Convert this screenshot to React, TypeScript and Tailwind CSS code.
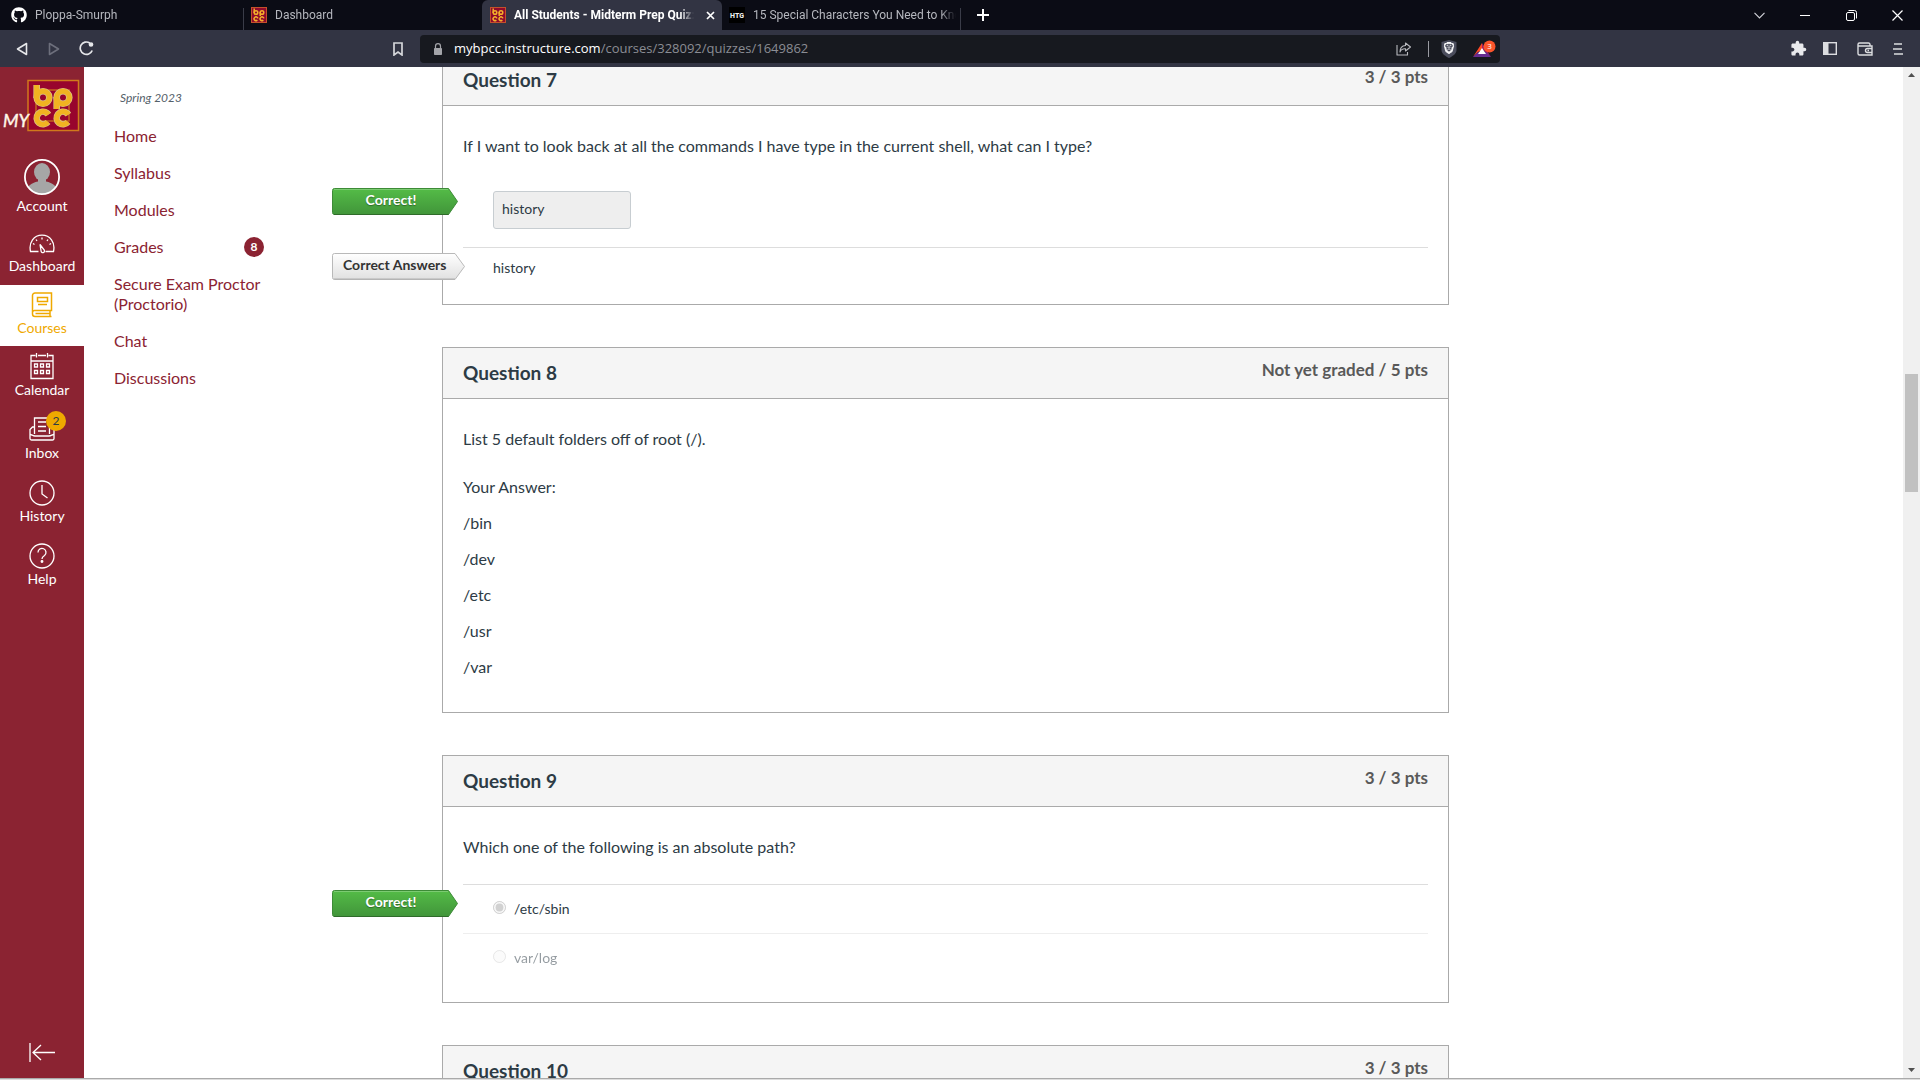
import type { ReactNode } from "react";
import { FaGithub } from "react-icons/fa";
import { SiBrave } from "react-icons/si";
import { MdExtension } from "react-icons/md";

/* ---------- Logos ---------- */

function CollegeFavicon() {
  return (
    <svg width="16" height="16" viewBox="0 0 16 16" className="shrink-0" aria-hidden="true">
      <rect x="0.5" y="0.5" width="15" height="15" fill="#8e0a2c" stroke="#c4502a" />
      <g fill="none" stroke="#f3b02a" strokeWidth="1.500">
        <circle cx="5" cy="5.500" r="1.800" />
        <line x1="3.200" y1="1.500" x2="3.200" y2="6" />
        <circle cx="11" cy="5.500" r="1.800" />
        <line x1="9.200" y1="5" x2="9.200" y2="9" />
        <circle cx="5" cy="11.800" r="1.900" strokeDasharray="9 3" transform="rotate(45 5 11.800)" />
        <circle cx="11" cy="11.800" r="1.900" strokeDasharray="9 3" transform="rotate(45 11 11.800)" />
      </g>
    </svg>
  );
}

function CollegeLogo() {
  return (
    <svg width="84" height="60" viewBox="0 0 84 60" aria-hidden="true">
      <rect x="28" y="5.500" width="50.500" height="50" fill="#98052d" stroke="#d07a1c" strokeWidth="1.500" />
      <rect x="36" y="15" width="33" height="31" fill="none" stroke="#c2641f" strokeWidth="1.500" />
      {[
        { color: "#d9c38a", width: 6.6 },
        { color: "#f1b321", width: 5.2 },
      ].map((s) => (
        <g key={s.color} fill="none" stroke={s.color} strokeWidth={s.width}>
          <circle cx="43" cy="22.500" r="6.300" />
          <line x1="36.700" y1="10" x2="36.700" y2="23" />
          <circle cx="63" cy="22.500" r="6.300" />
          <line x1="56.700" y1="22" x2="56.700" y2="34" />
          <circle cx="43" cy="43" r="6.300" strokeDasharray="31 8.600" transform="rotate(39 43 43)" />
          <circle cx="63" cy="43" r="6.300" strokeDasharray="31 8.600" transform="rotate(39 63 43)" />
        </g>
      ))}
      <g
        fontFamily="Lato, sans-serif"
        fontStyle="italic"
        fontSize="18"
        fill="#fff8e8"
        stroke="#fff8e8"
        strokeWidth="0.400"
      >
        <text x="3" y="52">
          MY
        </text>
      </g>
    </svg>
  );
}

/* ---------- Browser chrome ---------- */

function Tab({ icon, label, active }: { icon: ReactNode; label: string; active?: boolean }) {
  return (
    <div
      className={
        active
          ? "flex h-[30px] w-60 items-center gap-2 rounded-t-md bg-[#323443] pl-2 pr-1 text-white"
          : "flex h-[30px] items-center gap-2 pl-[7px] text-[#b5b7be]"
      }
    >
      {icon}
      <span
        className={
          active
            ? "min-w-0 flex-1 overflow-hidden whitespace-nowrap font-bold [mask-image:linear-gradient(to_right,black_92%,transparent)]"
            : "min-w-0 flex-1 overflow-hidden whitespace-nowrap [mask-image:linear-gradient(to_right,black_92%,transparent)]"
        }
      >
        {label}
      </span>
      {active && (
        <button aria-label="Close tab" className="flex w-4 justify-center">
          <svg width="9" height="9" viewBox="0 0 9 9" stroke="#fff" strokeWidth="1.700">
            <path d="M1 1l7 7M8 1l-7 7" />
          </svg>
        </button>
      )}
    </div>
  );
}

function TabStrip() {
  return (
    <div className="flex h-[30px] items-center bg-[#0b0c15] font-[Roboto,sans-serif] text-[12px]">
      <div className="w-[243px] pl-1">
        <Tab icon={<FaGithub size={16} color="#fff" className="shrink-0" />} label="Ploppa-Smurph" />
      </div>
      <div className="mt-2 h-[22px] w-px bg-[#3a3c48]" />
      <div className="w-[238px]">
        <Tab icon={<CollegeFavicon />} label="Dashboard" />
      </div>
      <Tab active icon={<CollegeFavicon />} label="All Students - Midterm Prep Quiz: CIT" />
      <div className="w-[238px] pr-1">
        <Tab
          icon={
            <svg width="16" height="16" viewBox="0 0 16 16" className="shrink-0 bg-black">
              <text x="8" y="11" fontSize="7" fontWeight="800" textAnchor="middle" fill="#eee" fontFamily="Roboto, sans-serif">
                HTG
              </text>
            </svg>
          }
          label="15 Special Characters You Need to Know for Bash"
        />
      </div>
      <div className="mt-2 h-[22px] w-px bg-[#3a3c48]" />
      <button aria-label="New tab" className="ml-3.5 flex size-4 items-center justify-center">
        <svg width="12" height="12" viewBox="0 0 12 12" stroke="#fff" strokeWidth="2">
          <path d="M6 0v12M0 6h12" />
        </svg>
      </button>
      <div className="ml-auto flex items-center">
        <button aria-label="Search tabs" className="flex w-[46px] justify-center">
          <svg width="11" height="7" viewBox="0 0 11 7" fill="none" stroke="#cfd0d6" strokeWidth="1.200">
            <path d="M.5 .8l5 5 5-5" />
          </svg>
        </button>
        <button aria-label="Minimize" className="flex w-[46px] justify-center">
          <svg width="10" height="10" viewBox="0 0 10 10" stroke="#fff">
            <path d="M0 5.500h10" />
          </svg>
        </button>
        <button aria-label="Restore" className="flex w-[46px] justify-center">
          <svg width="11" height="11" viewBox="0 0 11 11" fill="none" stroke="#fff">
            <rect x=".5" y="2.500" width="8" height="8" rx="1.500" />
            <path d="M2.500 .5h6a2 2 0 0 1 2 2v6" />
          </svg>
        </button>
        <button aria-label="Close window" className="flex w-[46px] justify-center">
          <svg width="11" height="11" viewBox="0 0 11 11" stroke="#fff" strokeWidth="1.200">
            <path d="M.5 .5l10 10M10.500 .5l-10 10" />
          </svg>
        </button>
      </div>
    </div>
  );
}

function Toolbar() {
  return (
    <div className="flex h-[37px] items-center bg-[#323443]">
      <div className="flex flex-none items-center pl-4">
        <button aria-label="Back" className="w-8">
          <svg width="12" height="14" viewBox="0 0 12 14" fill="none" stroke="#e6e7ea" strokeWidth="1.600" strokeLinejoin="round">
            <path d="M10.500 1.500v11L1.500 7z" />
          </svg>
        </button>
        <button aria-label="Forward" className="w-[31px]">
          <svg width="12" height="14" viewBox="0 0 12 14" fill="none" stroke="#6d6f7c" strokeWidth="1.600" strokeLinejoin="round">
            <path d="M1.500 1.500v11L10.500 7z" />
          </svg>
        </button>
        <button aria-label="Reload" className="w-[312px]">
          <svg width="15" height="15" viewBox="0 0 15 15" fill="none" stroke="#e6e7ea" strokeWidth="1.700">
            <path d="M10.800 2A6.200 6.200 0 1 0 13.200 9.500" />
            <circle cx="12" cy="3.500" r="1.500" fill="#e6e7ea" />
          </svg>
        </button>
        <button aria-label="Bookmark" className="w-[29px] pl-0.5">
          <svg width="10" height="14" viewBox="0 0 10 14" fill="none" stroke="#d5d6da" strokeWidth="1.700">
            <path d="M1 1h8v12L5 10 1 13z" />
          </svg>
        </button>
      </div>
      <div className="flex h-7 flex-1 items-center rounded bg-[#17191f] pl-3 pr-1">
        <svg width="12" height="12" viewBox="0 0 12 12" className="shrink-0">
          <rect x="2" y="5" width="8" height="7" rx=".8" fill="#a3a4a9" />
          <path d="M3.500 6V3.200a2.500 2.500 0 0 1 5 0V6" fill="none" stroke="#a3a4a9" strokeWidth="1.200" />
        </svg>
        <a href="#address" className="ml-2.5 flex-1 whitespace-nowrap text-[13px] text-[#8b8d94]">
          <span className="text-white">mybpcc.instructure.com</span>/courses/328092/quizzes/1649862
        </a>
        <button aria-label="Share this page">
          <svg width="15" height="14" viewBox="0 0 15 14" fill="none" stroke="#b9babf" strokeWidth="1.100" strokeLinejoin="round">
            <path d="M1 3v10h10.500v-3" />
            <path d="M9.500 1l5 4-5 4V6.800C6.500 6.600 4.800 7.800 4 10c0-3.800 2-6.300 5.500-6.500z" />
          </svg>
        </button>
        <div className="ml-[17px] mr-3 h-4 w-px bg-[#9a9ba2]" />
        <button aria-label="Brave Shields" className="flex w-4 justify-center">
          <svg width="16" height="18" viewBox="0 0 16 18">
            <path d="M8 0l7.500 2v8c0 4-4.500 6.500-7.500 8C5 16.500 .5 14 .5 10V2z" fill="#4b4d5d" />
            <SiBrave x="2" y="2" size={12} color="#f2f2f4" />
          </svg>
        </button>
        <button aria-label="Brave Rewards, 3 notifications" className="ml-4">
          <svg width="23" height="18" viewBox="0 0 23 18">
            <path d="M9 3v7l-4 2-5 5z" fill="#ff4724" />
            <path d="M9 3l9 14-6-5-3-3z" fill="#9e1f63" />
            <path d="M0 17h18l-5-5H5z" fill="#662d91" />
            <path d="M9 8l4 6H5z" fill="#fff" />
            <circle cx="16.500" cy="6.500" r="6" fill="#fb542b" />
            <text x="16.500" y="9" fontSize="8" textAnchor="middle" fill="#fff" fontFamily="Open Sans, sans-serif">
              3
            </text>
          </svg>
        </button>
      </div>
      <div className="flex w-[420px] flex-none items-center justify-end pr-[17px]">
        <button aria-label="Extensions" className="mr-4">
          <MdExtension size={17} color="#e8e9ec" />
        </button>
        <button aria-label="Sidebar" className="mr-5">
          <svg width="14" height="13" viewBox="0 0 14 13">
            <rect x=".7" y=".7" width="12.600" height="11.600" fill="none" stroke="#dcdde0" strokeWidth="1.400" />
            <rect x="1" y="1" width="4.500" height="11" fill="#dcdde0" />
          </svg>
        </button>
        <button aria-label="Wallet" className="mr-5">
          <svg width="16" height="14" viewBox="0 0 16 14" fill="none" stroke="#dcdde0" strokeWidth="1.400">
            <path d="M13 4V2.500A1.500 1.500 0 0 0 11.500 1h-9A1.500 1.500 0 0 0 1 2.500v9A1.500 1.500 0 0 0 2.500 13H15V4H1.500" />
            <path d="M15 6.500h-4.500a2 2 0 0 0 0 4H15M10.500 8.500h1.500" />
          </svg>
        </button>
        <button aria-label="Menu">
          <svg width="10" height="12" viewBox="0 0 10 12" stroke="#dcdde0" strokeWidth="1.500">
            <path d="M1 1h8M0 6h9M1 11h9" />
          </svg>
        </button>
      </div>
    </div>
  );
}

/* ---------- Global navigation ---------- */

const stroke = { fill: "none", stroke: "currentColor", strokeWidth: 1.3 } as const;

function NavItem({ label, icon, active }: { label: string; icon: ReactNode; active?: boolean }) {
  return (
    <a
      href={"#" + label.toLowerCase()}
      className={
        active
          ? "flex h-[61px] flex-col items-center justify-center gap-px bg-white pb-1 text-[14px] leading-[17px] text-[#efa900]"
          : "flex h-[63px] flex-col items-center justify-center gap-px pb-1 text-[14px] leading-[17px] text-white"
      }
    >
      {icon}
      {label}
    </a>
  );
}

function GlobalNav() {
  return (
    <nav aria-label="Global" className="flex w-[84px] flex-none flex-col bg-[#8b2332]">
      <a href="#home" aria-label="College home" className="pt-2">
        <CollegeLogo />
      </a>
      <a href="#account" className="mt-6 flex h-[63px] flex-col items-center gap-0.5 text-[14px] leading-[17px] text-white">
        <svg width="36" height="36" viewBox="0 0 36 36">
          <clipPath id="avatar">
            <circle cx="18" cy="18" r="17" />
          </clipPath>
          <circle cx="18" cy="18" r="17" fill="#8b2332" />
          <g clipPath="url(#avatar)" fill="#a6a6a6">
            <ellipse cx="18" cy="13" rx="8" ry="9" />
            <rect x="14" y="18" width="8" height="6" />
            <path d="M2 36c0-9 5-12 12-13.500h8C29 24 34 27 34 36z" />
          </g>
          <circle cx="18" cy="18" r="17.100" fill="none" stroke="#fff" strokeWidth="1.800" />
        </svg>
        <span>Account</span>
      </a>
      <NavItem
        label="Dashboard"
        icon={
          <svg width="26" height="20" viewBox="0 0 26 20" {...stroke} className="mb-0.5 mt-1">
            <path d="M9.500 17.500H1.500C-.5 8 5 1.200 13 1.200S26.500 8 24.500 17.500H16.500" />
            <path d="M11 10.500l4.300 5.700a1.700 1.700 0 1 1-3.200 1z" />
            <path d="M13 3.500v2M7 5.500l1 1.500M19 5.500l-1 1.500M4 9.500l1.500 1M22 9.500l-1.500 1" />
          </svg>
        }
      />
      <NavItem
        active
        label="Courses"
        icon={
          <svg width="22" height="26" viewBox="0 0 22 26" {...stroke} strokeWidth="1.500">
            <path d="M4 18.500H20.500V1H4a2.500 2.500 0 0 0-2.500 2.500V22A2.500 2.500 0 0 0 4 24.500h16.500M4 18.500a2 2 0 0 0-2.500 2M19 18.500v6M4.500 21.500H19" />
            <path d="M6.500 5.500h10v4h-10zM7 12.500h9" />
          </svg>
        }
      />
      <NavItem
        label="Calendar"
        icon={
          <svg width="24" height="27" viewBox="0 0 24 27" {...stroke}>
            <path d="M5.500 2.500H1v23h22v-23h-4.500M8 2.500h8M1 8h22M6.500 0v4.500M17.500 0v4.500" />
            <path d="M4.500 11h3v3h-3zM10.500 11h3v3h-3zM16.500 11h3v3h-3zM4.500 17.500h3v3h-3zM10.500 17.500h3v3h-3zM16.500 17.500h3v3h-3z" />
          </svg>
        }
      />
      <NavItem
        label="Inbox"
        icon={
          <span className="relative mb-0.5">
            <svg width="26" height="24" viewBox="0 0 26 24" {...stroke}>
              <path d="M5.500 17V1h15v16M5.500 10H3.500L1 12.500v9A1.500 1.500 0 0 0 2.500 23h21a1.500 1.500 0 0 0 1.500-1.500v-9L22.500 10h-2" />
              <path d="M1 17.500c2 0 2.500 1.500 5 1.500h14c2.500 0 3-1.500 5-1.500M9 5h8M9 9.500h8M9 14h8" />
            </svg>
            <span className="absolute -top-1.5 left-[17px] flex size-5 items-center justify-center rounded-full bg-[#efa900] text-[12px] text-[#2d3b45]">
              2
            </span>
          </span>
        }
      />
      <NavItem
        label="History"
        icon={
          <svg width="26" height="26" viewBox="0 0 26 26" {...stroke}>
            <circle cx="13" cy="13" r="12" />
            <path d="M13 5v9l5.500 4" />
          </svg>
        }
      />
      <NavItem
        label="Help"
        icon={
          <svg width="26" height="26" viewBox="0 0 26 26" {...stroke}>
            <circle cx="13" cy="13" r="12" />
            <path d="M9 9.500a4 4 0 1 1 6.500 3c-1.500 1-2.500 1.500-2.500 3.500" />
            <circle cx="13" cy="18.500" r=".8" fill="currentColor" />
          </svg>
        }
      />
      <button aria-label="Minimize global navigation" className="mt-auto flex justify-center pb-4 text-white">
        <svg width="26" height="19" viewBox="0 0 26 19" {...stroke}>
          <path d="M1 0v19M4 9.500h22M12 2L4 9.500l8 7.500" />
        </svg>
      </button>
    </nav>
  );
}

/* ---------- Course navigation ---------- */

function CourseNav() {
  const links = ["Home", "Syllabus", "Modules", "Grades", "Secure Exam Proctor (Proctorio)", "Chat", "Discussions"];
  return (
    <nav aria-label="Course" className="w-[192px] flex-none pl-[30px] pt-[22px]">
      <p className="pl-1.5 text-[12px] italic leading-[18px] text-[#55616a]">Spring 2023</p>
      <ul className="mt-[11px] text-[16px] leading-5 text-[#8b2332]">
        {links.map((link) => (
          <li key={link} className="mt-px">
            <a href={"#" + link.split(" ")[0].toLowerCase()} className="flex items-center justify-between py-2">
              {link}
              {link === "Grades" && (
                <span className="mr-3 flex size-5 items-center justify-center rounded-full bg-[#8b2332] text-[12px] font-bold text-white">
                  8
                </span>
              )}
            </a>
          </li>
        ))}
      </ul>
    </nav>
  );
}

/* ---------- Quiz ---------- */

function CorrectFlag() {
  return (
    <span className="absolute -left-[131px] top-[5px] flex h-[27px] w-[126px] items-center">
      <svg width="126" height="27" viewBox="0 0 126 27" className="absolute inset-0">
        <defs>
          <linearGradient id="green" x1="0" y1="0" x2="0" y2="1">
            <stop offset="0" stopColor="#54bc47" />
            <stop offset="1" stopColor="#41953a" />
          </linearGradient>
        </defs>
        <path d="M2.500 .5H116.500L125.500 13.500L116.500 26.500H2.500a2 2 0 0 1-2-2v-22a2 2 0 0 1 2-2z" fill="url(#green)" stroke="#3d8b37" />
        <path d="M2 1.500H116" stroke="#7ccb72" />
        <path d="M2 26.500H116.500" stroke="#2f6b2a" />
      </svg>
      <span className="relative w-[118px] pb-[3px] text-center text-[14px] font-bold leading-[18px] text-white [text-shadow:0_1px_1px_#2f6b2a]">
        Correct!
      </span>
    </span>
  );
}

function AnswersFlag() {
  return (
    <span className="absolute -left-[131px] top-[5px] flex h-[27px] w-[133px] items-center">
      <svg width="133" height="27" viewBox="0 0 133 27" className="absolute inset-0">
        <defs>
          <linearGradient id="grey" x1="0" y1="0" x2="0" y2="1">
            <stop offset="0" stopColor="#fff" />
            <stop offset="1" stopColor="#e0e0e0" />
          </linearGradient>
        </defs>
        <path d="M2.500 .5H123L132.500 13.500L123 26.500H2.500a2 2 0 0 1-2-2v-22a2 2 0 0 1 2-2z" fill="url(#grey)" stroke="#b9b9b9" />
        <path d="M2 26H123" stroke="#b0b0b0" />
      </svg>
      <span className="relative pb-[3px] pl-[11px] text-[14px] font-bold leading-[18px] text-[#333]">Correct Answers</span>
    </span>
  );
}

function Question({ n, points, first, children }: { n: number; points: string; first?: boolean; children: ReactNode }) {
  return (
    <section
      className={
        first
          ? "-mt-[13px] mb-[42px] border border-[#aaa] bg-white"
          : "mb-[42px] border border-[#aaa] bg-white"
      }
    >
      <header className="flex h-[51px] items-start justify-between border-b border-[#aaa] bg-[#f5f5f5] px-5">
        <h2 className="pt-[13px] text-[19px] font-bold leading-6 text-[#2d3b45]">Question {n}</h2>
        <span className="pt-2.5 text-[17px] font-bold leading-6 text-[#595959]">{points}</span>
      </header>
      <div className="px-5 pt-7 text-[16px] leading-6">{children}</div>
    </section>
  );
}

function Quiz() {
  return (
    <main className="min-w-0 flex-1 overflow-hidden pl-[166px] text-[#2d3b45]">
      <div className="w-full max-w-[1007px]">
        <Question n={7} points="3 / 3 pts" first>
          <p>If I want to look back at all the commands I have type in the current shell, what can I type?</p>
          <div className="relative mt-[25px] flex h-16 items-start pl-[30px] pt-2">
            <CorrectFlag />
            <input
              aria-label="Your answer"
              disabled
              defaultValue="history"
              className="h-[38px] w-[138px] rounded-[3px] border border-[#c7cdd1] bg-[#eee] px-2 pb-[3px] text-[14px]"
            />
          </div>
          <div className="relative h-[57px] border-t border-[#ddd] pl-[30px] pt-2 text-[14px]">
            <AnswersFlag />
            history
          </div>
        </Question>

        <Question n={8} points="Not yet graded / 5 pts">
          <p>List 5 default folders off of root (/).</p>
          <p className="mt-6">Your Answer:</p>
          {["/bin", "/dev", "/etc", "/usr"].map((path) => (
            <p key={path} className="mt-3">
              {path}
            </p>
          ))}
          <p className="mb-[33px] mt-3">/var</p>
        </Question>

        <Question n={9} points="3 / 3 pts">
          <p>Which one of the following is an absolute path?</p>
          <div className="relative mt-[25px] h-[49px] border-t border-[#ddd] pl-[30px] pt-3 text-[14px]">
            <CorrectFlag />
            <label className="flex items-start gap-2">
              <input type="radio" name="q9" disabled defaultChecked className="mt-1 size-[13px]" />
              /etc/sbin
            </label>
          </div>
          <div className="h-[69px] border-t border-[#eee] pl-[30px] pt-3 text-[14px]">
            <label className="flex items-start gap-2 opacity-50">
              <input type="radio" name="q9b" disabled className="mt-1 size-[13px]" />
              var/log
            </label>
          </div>
        </Question>

        <Question n={10} points="3 / 3 pts">
          <p />
        </Question>
      </div>
    </main>
  );
}

function ScrollRail() {
  return (
    <div className="flex w-[17px] flex-none flex-col items-center justify-between bg-[#f0f0f0] py-1.5">
      <svg width="7" height="4" viewBox="0 0 7 4" fill="#505050">
        <path d="M3.500 0L7 4H0z" />
      </svg>
      <div className="flex w-[13px] flex-1 flex-col pt-[297px]">
        <div className="h-[118px] bg-[#c1c1c1]" />
      </div>
      <svg width="7" height="4" viewBox="0 0 7 4" fill="#505050">
        <path d="M0 0h7L3.500 4z" />
      </svg>
    </div>
  );
}

export default function App() {
  return (
    <div className="flex h-screen flex-col overflow-hidden bg-white">
      <div className="flex-none font-['Open_Sans',sans-serif]">
        <TabStrip />
        <Toolbar />
      </div>
      <div className="flex min-h-0 flex-1 font-[Lato,sans-serif]">
        <GlobalNav />
        <CourseNav />
        <Quiz />
        <ScrollRail />
      </div>
      <div className="h-0.5 flex-none border-t border-[#aaa] bg-[#ddd]" />
    </div>
  );
}
